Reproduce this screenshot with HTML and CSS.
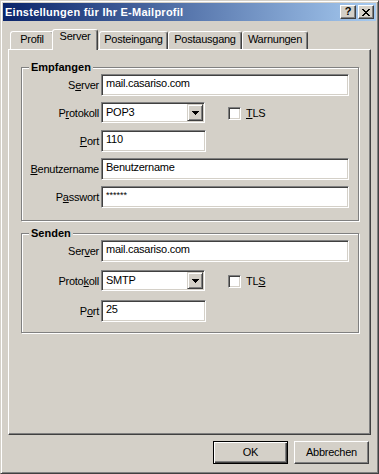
FILE: index.html
```html
<!DOCTYPE html>
<html lang="de">
<head>
<meta charset="utf-8">
<title>Einstellungen für Ihr E-Mailprofil</title>
<link rel="stylesheet" href="styles.css">
</head>
<body>
<div class="window">
  <div class="titlebar">
    <span class="title">Einstellungen für Ihr E-Mailprofil</span>
    <div class="tbtns">
      <span class="tbtn help">?</span>
      <span class="tbtn close">
        <svg width="8" height="7" viewBox="0 0 8 7" shape-rendering="crispEdges">
          <rect x="0" y="0" width="2" height="1"/><rect x="6" y="0" width="2" height="1"/>
          <rect x="1" y="1" width="2" height="1"/><rect x="5" y="1" width="2" height="1"/>
          <rect x="2" y="2" width="4" height="1"/>
          <rect x="3" y="3" width="2" height="1"/>
          <rect x="2" y="4" width="4" height="1"/>
          <rect x="1" y="5" width="2" height="1"/><rect x="5" y="5" width="2" height="1"/>
          <rect x="0" y="6" width="2" height="1"/><rect x="6" y="6" width="2" height="1"/>
        </svg>
      </span>
    </div>
  </div>
  <div class="body">
    <div class="tabs">
      <div class="tab t-profil">Profil</div>
      <div class="tab t-server active">Server</div>
      <div class="tab t-ein">Posteingang</div>
      <div class="tab t-aus">Postausgang</div>
      <div class="tab t-warn">Warnungen</div>
    </div>
    <div class="panel">
      <fieldset class="group g-recv">
        <legend>Empfangen</legend>
        <div class="rows">
          <div class="row"><span class="lbl">S<u>e</u>rver</span><div class="edit wide">mail.casariso.com</div></div>
          <div class="row"><span class="lbl">P<u>r</u>otokoll</span>
            <div class="combo"><span class="combo-text">POP3</span><span class="combo-btn"><svg width="7" height="4" viewBox="0 0 7 4" shape-rendering="crispEdges"><rect x="0" y="0" width="7" height="1"/><rect x="1" y="1" width="5" height="1"/><rect x="2" y="2" width="3" height="1"/><rect x="3" y="3" width="1" height="1"/></svg></span></div>
            <span class="check"></span><span class="chklbl"><u>T</u>LS</span>
          </div>
          <div class="row"><span class="lbl"><u>P</u>ort</span><div class="edit short">110</div></div>
          <div class="row"><span class="lbl"><u>B</u>enutzername</span><div class="edit wide">Benutzername</div></div>
          <div class="row"><span class="lbl">P<u>a</u>sswort</span><div class="edit wide pw">******</div></div>
        </div>
      </fieldset>
      <fieldset class="group g-send">
        <legend>Senden</legend>
        <div class="rows">
          <div class="row"><span class="lbl">Ser<u>v</u>er</span><div class="edit wide">mail.casariso.com</div></div>
          <div class="row"><span class="lbl">Proto<u>k</u>oll</span>
            <div class="combo"><span class="combo-text">SMTP</span><span class="combo-btn"><svg width="7" height="4" viewBox="0 0 7 4" shape-rendering="crispEdges"><rect x="0" y="0" width="7" height="1"/><rect x="1" y="1" width="5" height="1"/><rect x="2" y="2" width="3" height="1"/><rect x="3" y="3" width="1" height="1"/></svg></span></div>
            <span class="check"></span><span class="chklbl">TL<u>S</u></span>
          </div>
          <div class="row"><span class="lbl">P<u>o</u>rt</span><div class="edit short">25</div></div>
        </div>
      </fieldset>
    </div>
    <div class="buttons">
      <span class="btn default">OK</span>
      <span class="btn">Abbrechen</span>
    </div>
  </div>
</div>
</body>
</html>
```
FILE: styles.css
```css
html, body {
  margin: 0;
  padding: 0;
  background: #d4d0c8;
}
body {
  font-family: "Liberation Sans", Arial, sans-serif;
  font-size: 11px;
  letter-spacing: -0.25px;
  color: #000;
}
.window {
  width: 379px;
  height: 474px;
  box-sizing: border-box;
  background: #d4d0c8;
  border: 1px solid;
  border-color: #d4d0c8 #404040 #404040 #d4d0c8;
  box-shadow: inset 1px 1px #fff, inset -1px -1px #808080;
  padding: 2px;
  display: flex;
  flex-direction: column;
}
.titlebar {
  height: 18px;
  flex: 0 0 18px;
  background: linear-gradient(to right, #0a246a, #a6caf0);
  display: flex;
  align-items: center;
  padding: 0 2px 0 2px;
}
.title {
  color: #fff;
  font-weight: bold;
  letter-spacing: 0.25px;
  line-height: 13px;
  white-space: nowrap;
}
.tbtns {
  margin-left: auto;
  display: flex;
  gap: 2px;
}
.tbtn {
  width: 16px;
  height: 14px;
  box-sizing: border-box;
  background: #d4d0c8;
  border: 1px solid;
  border-color: #fff #404040 #404040 #fff;
  box-shadow: inset -1px -1px #808080;
  display: flex;
  align-items: center;
  justify-content: center;
  font-weight: bold;
  font-size: 11px;
  line-height: 11px;
  letter-spacing: 0;
}
.tbtn svg { display: block; fill: #000; }
.help { padding-bottom: 1px; }
.body {
  flex: 1;
  display: flex;
  flex-direction: column;
  padding: 8px 5px 7px 5px;
  min-height: 0;
}
.tabs {
  display: flex;
  align-items: flex-end;
  height: 20px;
  flex: 0 0 20px;
  padding-left: 2px;
}
.tab {
  box-sizing: border-box;
  height: 18px;
  border: 1px solid;
  border-bottom: none;
  border-color: #fff #404040 transparent #fff;
  border-radius: 3px 3px 0 0;
  box-shadow: inset -1px 0 #808080;
  background: #d4d0c8;
  text-align: center;
  line-height: 15px;
  white-space: nowrap;
}
.t-profil { width: 44px; }
.t-server { width: 46px; }
.t-ein { width: 69px; margin-left: 2px; }
.t-aus { width: 74px; }
.t-warn { width: 66px; }
.tab.active {
  height: 21px;
  margin: 0 -1px -1px -2px;
  position: relative;
  z-index: 1;
  line-height: 13px;
}
.panel {
  flex: 1;
  box-sizing: border-box;
  border: 1px solid;
  border-color: #fff #404040 #404040 #fff;
  box-shadow: inset -1px -1px #808080;
  padding-top: 11px;
}
.group {
  margin: 0 11px 0 12px;
  padding: 0 8px 12px 0;
  border: 1px solid #808080;
  box-shadow: inset 1px 1px #fff, 1px 1px #fff;
  min-width: 0;
}
.g-send {
  margin-top: 6px;
  padding-bottom: 10px;
}
.group legend {
  font-weight: bold;
  letter-spacing: 0;
  padding: 0 2px;
  margin-left: 7px;
  line-height: 13px;
  background: #d4d0c8;
}
.rows {
  display: flex;
  flex-direction: column;
  gap: 6px;
}
.g-send .rows { gap: 8px; }
.row {
  display: flex;
  align-items: center;
  height: 22px;
}
.lbl {
  flex: 0 0 77px;
  text-align: right;
  margin-right: 2px;
  line-height: 13px;
  white-space: nowrap;
}
.edit {
  box-sizing: border-box;
  height: 22px;
  background: #fff;
  border: 1px solid;
  border-color: #808080 #fff #fff #808080;
  box-shadow: inset 1px 1px #404040, inset -1px -1px #d4d0c8;
  padding: 2px 4px 0 4px;
  line-height: 13px;
  white-space: nowrap;
  overflow: hidden;
}
.wide { width: 248px; }
.short { width: 105px; }
.pw { font-size: 9px; line-height: 12px; letter-spacing: 0; }
.combo {
  align-self: flex-start;
  box-sizing: border-box;
  width: 104px;
  height: 21px;
  background: #fff;
  border: 1px solid;
  border-color: #808080 #fff #fff #808080;
  box-shadow: inset 1px 1px #404040, inset -1px -1px #d4d0c8;
  display: flex;
  align-items: center;
  padding: 0 1px 0 4px;
}
.combo-text {
  flex: 1;
  line-height: 13px;
}
.combo-btn {
  width: 16px;
  height: 17px;
  box-sizing: border-box;
  background: #d4d0c8;
  border: 1px solid;
  border-color: #d4d0c8 #404040 #404040 #d4d0c8;
  box-shadow: inset 1px 1px #fff, inset -1px -1px #808080;
  display: flex;
  align-items: center;
  justify-content: center;
}
.combo-btn svg { display: block; fill: #000; }
.check {
  width: 13px;
  height: 13px;
  box-sizing: border-box;
  background: #fff;
  border: 1px solid;
  border-color: #808080 #fff #fff #808080;
  box-shadow: inset 1px 1px #404040, inset -1px -1px #d4d0c8;
  margin-left: 23px;
}
.chklbl {
  margin-left: 5px;
  line-height: 13px;
}
.buttons {
  display: flex;
  justify-content: flex-end;
  gap: 6px;
  margin-top: 6px;
  padding-right: 2px;
}
.btn {
  width: 75px;
  height: 23px;
  box-sizing: border-box;
  background: #d4d0c8;
  border: 1px solid;
  border-color: #fff #404040 #404040 #fff;
  box-shadow: inset -1px -1px #808080;
  display: flex;
  align-items: center;
  justify-content: center;
  line-height: 13px;
}
.btn.default {
  border-color: #000;
  box-shadow: inset 1px 1px #fff, inset -1px -1px #404040, inset -2px -2px #808080;
}
```
